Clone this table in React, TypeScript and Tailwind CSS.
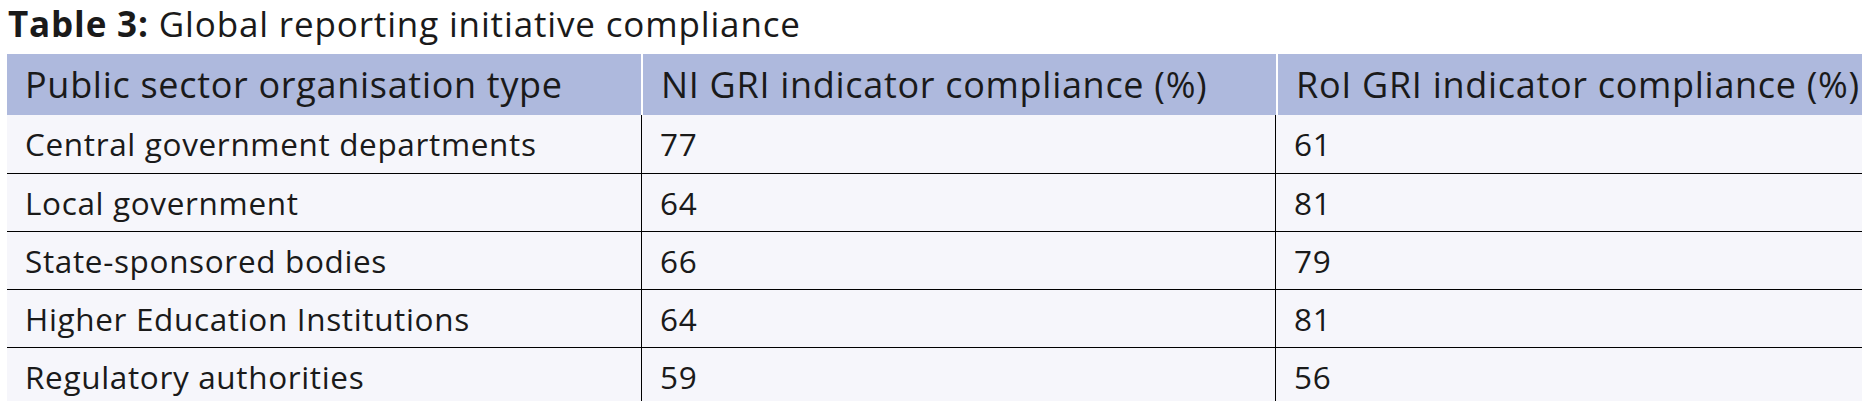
import React from 'react';

const rows = [
  ['Central government departments', '77', '61'],
  ['Local government', '64', '81'],
  ['State-sponsored bodies', '66', '79'],
  ['Higher Education Institutions', '64', '81'],
  ['Regulatory authorities', '59', '56'],
];

const headers = [
  'Public sector organisation type',
  'NI GRI indicator compliance (%)',
  'RoI GRI indicator compliance (%)',
];

export default function App() {
  return (
    <div className="w-[1862px] h-[401px] overflow-hidden bg-white text-[#1a1a1a] font-['Open_Sans',sans-serif]">
      <h1 className="h-[54px] pl-[8px] text-[35px] leading-[48px] tracking-[0.85px] whitespace-nowrap">
        <span className="font-bold">Table 3:</span> Global reporting initiative compliance
      </h1>

      <div className="ml-[7px] w-[1902px]">
        <div className="grid grid-cols-[634px_633px_635px] gap-x-[2px] h-[61px]">
          {headers.map((h) => (
            <div key={h} className="bg-[#aeb9dd] flex items-center pl-[18px] text-[36px] tracking-[0.7px] whitespace-nowrap">
              {h}
            </div>
          ))}
        </div>

        {rows.map((r, i) => (
          <div
            key={r[0]}
            className={
              'grid grid-cols-[634px_634px_634px] h-[58px] bg-[#f6f6fb] text-[31.5px] tracking-[0.65px] ' +
              (i > 0 ? 'border-t border-black' : '')
            }
          >
            {r.map((c, j) => (
              <div
                key={j}
                className={'flex items-center pl-[18px] whitespace-nowrap ' + (j > 0 ? 'border-l border-black' : '')}
              >
                {c}
              </div>
            ))}
          </div>
        ))}
      </div>
    </div>
  );
}
